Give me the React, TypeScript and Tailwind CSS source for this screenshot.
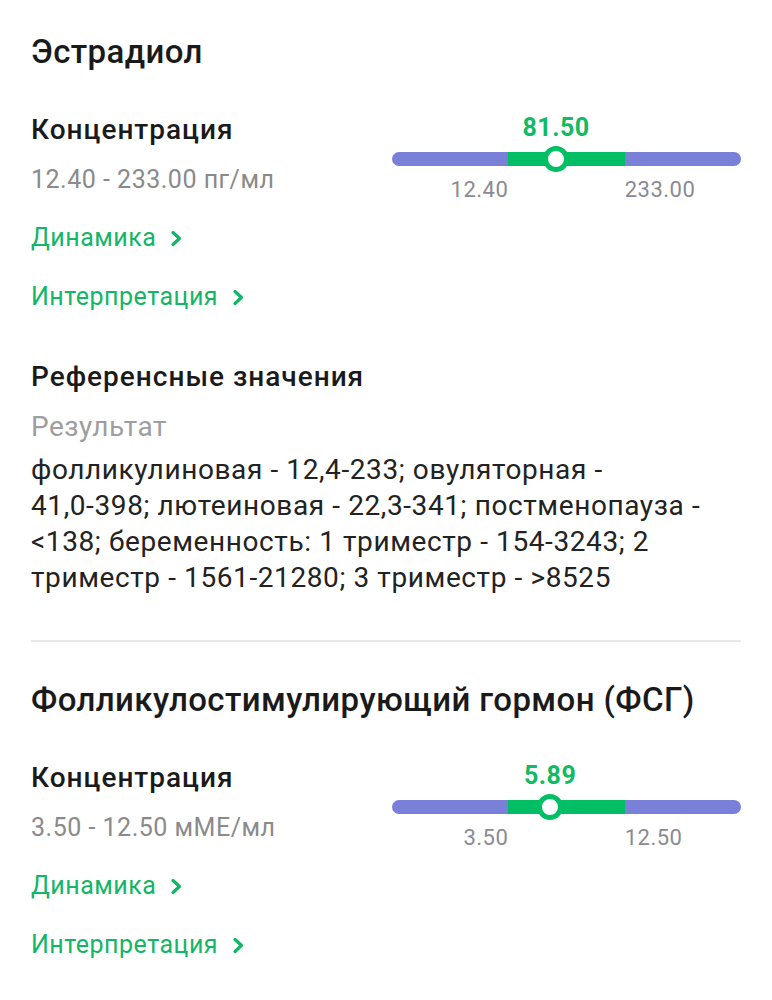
import React from 'react';

type Analyte = {
  name: string;
  value: string;
  low: string;
  high: string;
  unit: string;
  pos: number;
};

const ESTRADIOL: Analyte = { name: 'Эстрадиол', value: '81.50', low: '12.40', high: '233.00', unit: 'пг/мл', pos: 47 };
const FSH: Analyte = { name: 'Фолликулостимулирующий гормон (ФСГ)', value: '5.89', low: '3.50', high: '12.50', unit: 'мМЕ/мл', pos: 45.3 };

// reference text, ranges kept unbroken
const REFERENCE: string[] = [
  'фолликулиновая - ', '12,4-233;', ' овуляторная - ', '41,0-398;', ' лютеиновая - ', '22,3-341;',
  ' постменопауза - ', '<138;', ' беременность: 1 триместр - ', '154-3243;', ' 2 триместр - ', '1561-21280;',
  ' 3 триместр - ', '>8525',
];

function Chevron() {
  return (
    <svg width="13" height="17" viewBox="0 0 13 17" fill="none" className="ml-[14px]">
      <path d="M3 2.5 L9.5 8.5 L3 14.5" stroke="#13b566" strokeWidth="3.2" strokeLinecap="round" strokeLinejoin="round" />
    </svg>
  );
}

function LinkRow({ label, className }: { label: string; className: string }) {
  return (
    <div className={`flex items-center text-[25px] leading-[30px] tracking-[0.5px] text-[#13b566] ${className}`}>
      <span>{label}</span>
      <Chevron />
    </div>
  );
}

function RangeBar({ a }: { a: Analyte }) {
  return (
    <div className="w-[349px] flex flex-col">
      <div className="relative h-[28px]">
        <span
          className="absolute top-0 -translate-x-1/2 text-[25px] leading-[28px] tracking-[0.5px] font-bold text-[#0fbb63]"
          style={{ left: `${a.pos}%` }}
        >
          {a.value}
        </span>
      </div>
      <div className="relative mt-[4px] h-[26px] flex items-center">
        <div className="flex w-full h-[14px]">
          <div className="flex-1 rounded-l-full bg-[#7a7fd7]" />
          <div className="flex-1 bg-[#00be64]" />
          <div className="flex-1 rounded-r-full bg-[#7a7fd7]" />
        </div>
        <div
          className="absolute top-0 -translate-x-1/2 w-[26px] h-[26px] rounded-full border-[5px] border-[#00be64] bg-white"
          style={{ left: `${a.pos}%` }}
        />
      </div>
      <div className="mt-[5px] grid grid-cols-3 text-[22px] leading-[26px] tracking-[0.5px] text-[#8a8a92]">
        <span className="text-right">{a.low}</span>
        <span />
        <span className="text-left">{a.high}</span>
      </div>
    </div>
  );
}

function Analyte({ a, titleTop }: { a: Analyte; titleTop: string }) {
  return (
    <section>
      <h2 className={`text-[33px] leading-[36px] tracking-[0.4px] font-medium text-[#1a1a1a] ${titleTop}`}>{a.name}</h2>
      <div className="mt-[44px] flex justify-between">
        <div className="flex flex-col">
          <div className="text-[28px] leading-[32px] tracking-[1px] font-medium text-[#1a1a1a]">Концентрация</div>
          <div className="mt-[19px] text-[25px] leading-[30px] tracking-[0.5px] text-[#8a8a8a]">
            {a.low} - {a.high} {a.unit}
          </div>
          <LinkRow label="Динамика" className="mt-[28px]" />
          <LinkRow label="Интерпретация" className="mt-[29px]" />
        </div>
        <RangeBar a={a} />
      </div>
    </section>
  );
}

export default function App() {
  return (
    <div className="min-h-screen bg-white px-[31px] font-['Roboto',_'Noto_Sans',_sans-serif]">
      <Analyte a={ESTRADIOL} titleTop="pt-[34px]" />

      <section className="mt-[49px]">
        <h3 className="text-[28px] leading-[32px] tracking-[1px] font-medium text-[#1a1a1a]">Референсные значения</h3>
        <div className="mt-[18px] text-[28px] leading-[32px] tracking-[0.5px] text-[#9e9e9e]">Результат</div>
        <p className="mt-[9px] pr-[18px] text-[28px] leading-[36px] tracking-[0.6px] text-[#222222]">
          {REFERENCE.map((part, i) =>
            i % 2 === 1 ? (
              <span key={i} className="whitespace-nowrap">
                {part}
              </span>
            ) : (
              <React.Fragment key={i}>{part}</React.Fragment>
            ),
          )}
        </p>
      </section>

      <div className="mt-[44px] h-[2px] bg-[#e8e8e8]" />

      <Analyte a={FSH} titleTop="pt-[40px]" />
    </div>
  );
}
